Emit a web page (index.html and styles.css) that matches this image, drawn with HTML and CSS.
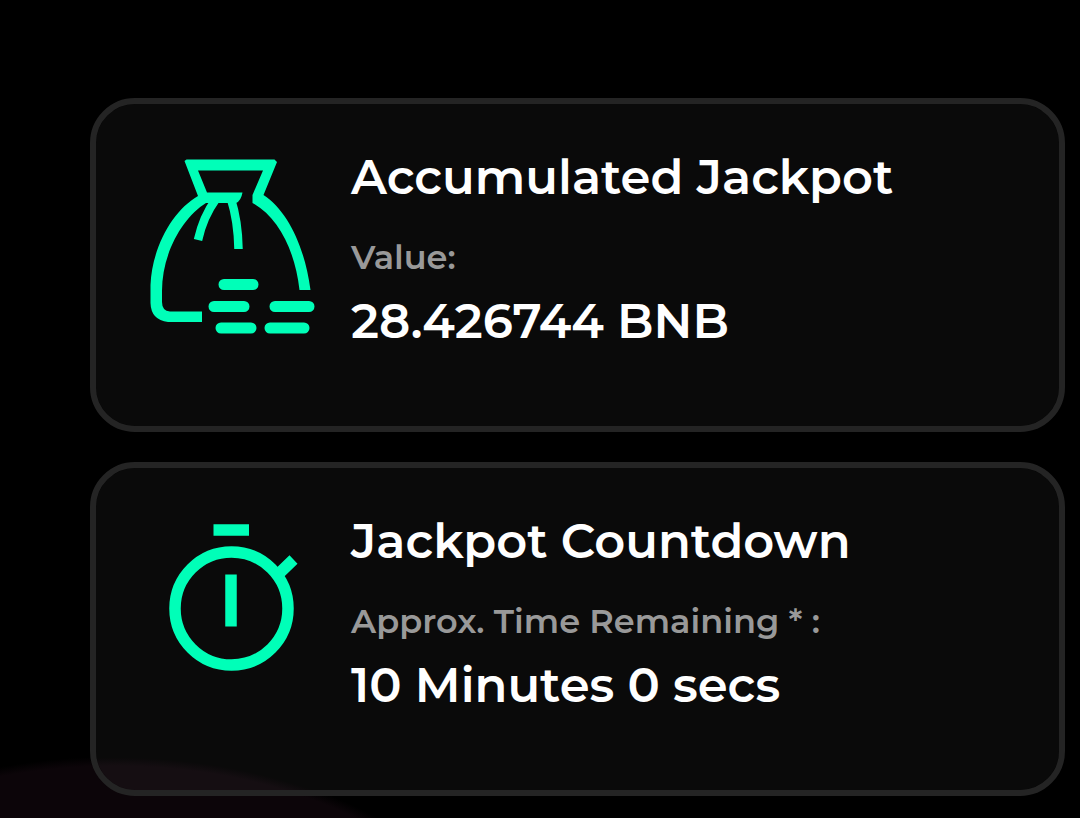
FILE: index.html
```html
<!DOCTYPE html>
<html lang="en">
<head>
<meta charset="utf-8">
<title>Jackpot</title>
<link rel="stylesheet" href="styles.css">
</head>
<body>
<main class="cards">
  <section class="card">
    <svg class="icon" viewBox="0 0 190 230" fill="none" stroke="#00ffb8" stroke-width="11">
      <path d="M44.500 16L46.500 14.500H134.500L137 17L123.500 50C148 66 165 103 170.500 145H159.500C155 105 138 72 112.500 58V50L123 25.500H58L67 47.500H102.500Q101 56 96 58H66C43 72 22 108 22 146V157Q22 166 30 166.500H62V177H28Q11 175 10.500 158V140C12 103 32 66 58 51Z" fill="#00ffb8" stroke="none"/>
      <path d="M76 54Q63 72 58 95M91 54Q98 76 98.500 104" stroke-width="8.500"/>
      <path d="M84 139.500H113M74 161.500H104M81 183H111M135 161.500H169M130 183H164" stroke-linecap="round"/>
    </svg>
    <div class="details">
      <h2 class="title">Accumulated Jackpot</h2>
      <p class="label">Value:</p>
      <p class="value">28.426744 BNB</p>
    </div>
  </section>
  <section class="card">
    <svg class="icon" viewBox="0 0 190 230" fill="none" stroke="#00ffb8" stroke-width="11.500">
      <circle cx="91.500" cy="99.500" r="56.500"/>
      <path d="M73.500 21H109M91 65.500V117.500M138 65.500L153.500 50.500"/>
    </svg>
    <div class="details">
      <h2 class="title">Jackpot Countdown</h2>
      <p class="label">Approx. Time Remaining * :</p>
      <p class="value">10 Minutes 0 secs</p>
    </div>
  </section>
</main>
</body>
</html>
```
FILE: styles.css
```css
* { box-sizing: border-box; }
body {
  margin: 0;
  height: 818px;
  overflow: hidden;
  background: radial-gradient(ellipse 385px 230px at 115px 989px, #0c0509 0, #0c0509 97%, #000 101%) #000;
  color: #fff;
  font-family: Montserrat, Inter, sans-serif;
}
.cards { display: flex; flex-direction: column; gap: 30px; padding: 98px 15px 0 90px; }
.card {
  display: flex;
  height: 334px;
  border: 6px solid #242424;
  border-radius: 45px;
  background: rgba(255, 255, 255, .04);
  background-clip: padding-box;
}
.icon { flex: none; width: 190px; height: 230px; margin: 41px 21px 0 44px; }
.details { padding-top: 43px; white-space: nowrap; }
.title, .label, .value { margin: 0; font-weight: 600; }
.title, .value { font-size: 48px; line-height: 60px; }
.label { margin-top: 30px; color: #999; font-size: 33.6px; line-height: 40px; }
.value { margin-top: 14px; }
```
